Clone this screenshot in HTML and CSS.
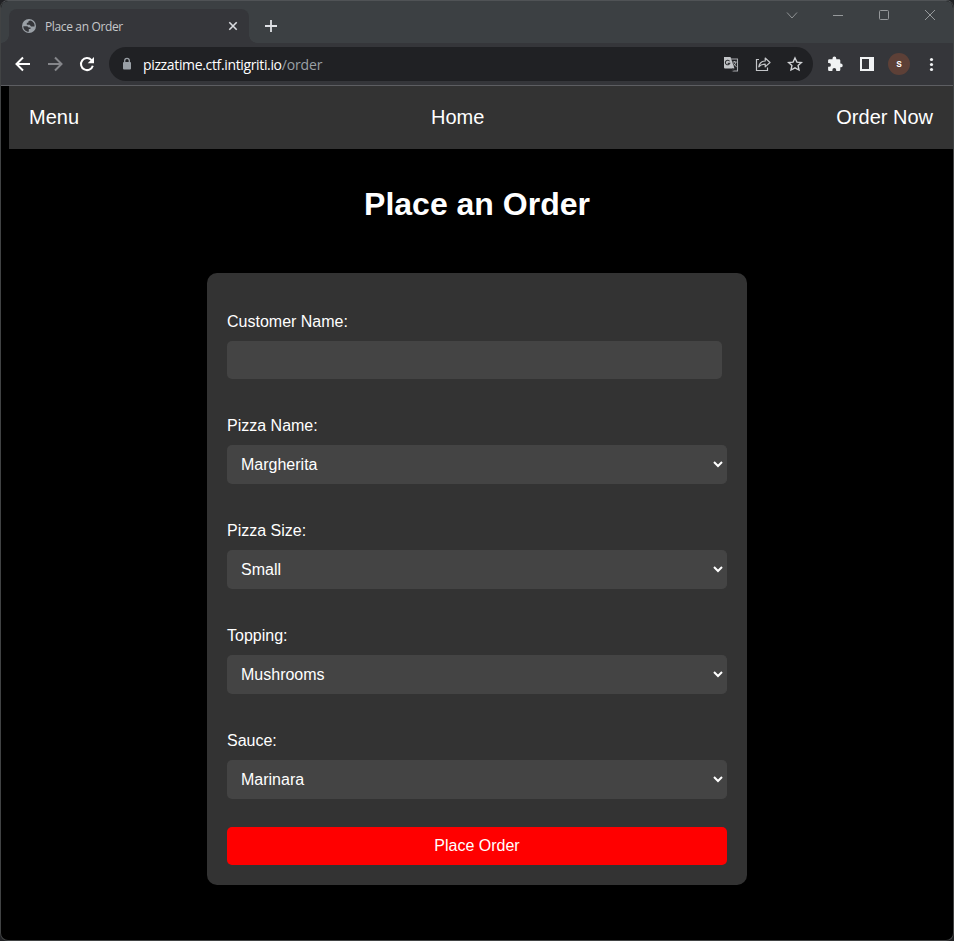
FILE: index.html
```html
<!DOCTYPE html>
<html lang="en">
<head>
<meta charset="utf-8">
<title>Place an Order</title>
<link rel="stylesheet" href="styles.css">
</head>
<body>
<div class="window">
  <header class="tabstrip">
    <div class="tab">
      <svg class="globe" width="16" height="16" viewBox="0 0 16 16"><circle cx="8" cy="8" r="7" fill="#9aa0a6"/><path d="M2.300 8.200h4l1.400 1.300h1.800v1.600H7.800v2.600C4.700 13.700 2.300 11.200 2.300 8.200zM9 2.400L7.300 3.500v1.300H5.800v1.900h2.700l1.700 1.700h3.300c.6-2.700-1.300-5.300-4.500-6z" fill="#35363a"/></svg>
      <span class="tab-title">Place an Order</span>
      <svg class="tab-close" width="16" height="16" viewBox="0 0 16 16"><path d="M4.300 4.300l7.400 7.400M11.700 4.300l-7.400 7.400" stroke="#dadce0" stroke-width="1.6"/></svg>
    </div>
    <svg class="new-tab" width="16" height="16" viewBox="0 0 16 16"><path d="M8 2v12M2 8h12" stroke="#dfe1e5" stroke-width="1.8"/></svg>
    <div class="controls">
      <svg width="46" height="28" viewBox="0 0 46 28"><path d="M18 11.500l5 5.500 5-5.500" fill="none" stroke="#8f9294"/></svg>
      <svg width="46" height="28" viewBox="0 0 46 28"><path d="M18 14.500h10" stroke="#96999b"/></svg>
      <svg width="46" height="28" viewBox="0 0 46 28"><rect x="18.500" y="9.500" width="9" height="9" rx="1" fill="none" stroke="#96999b"/></svg>
      <svg width="46" height="28" viewBox="0 0 46 28"><path d="M18 9l10 10M28 9L18 19" stroke="#96999b"/></svg>
    </div>
  </header>
  <div class="toolbar">
    <svg class="tool" viewBox="0 0 32 32"><path d="M23 16H10M16 9.500L9.500 16l6.500 6.500" fill="none" stroke="#fff" stroke-width="2"/></svg>
    <svg class="tool" viewBox="0 0 32 32"><path d="M9 16h13M16 9.500l6.500 6.500-6.500 6.500" fill="none" stroke="#85868a" stroke-width="2"/></svg>
    <svg class="tool" viewBox="0 0 32 32"><path d="M20.500 12.100A6 6 0 1 0 21.800 17.700" fill="none" stroke="#fff" stroke-width="2"/><path d="M23 9v6.300h-6.300z" fill="#fff"/></svg>
    <div class="omnibox">
      <svg class="lock" width="12" height="14" viewBox="0 0 12 14"><rect x="2" y="5" width="8" height="7.500" rx="1" fill="#9aa0a6"/><path d="M3.700 5.500V3.600a2.300 2.300 0 0 1 4.600 0v1.900" fill="none" stroke="#9aa0a6" stroke-width="1.300"/></svg>
      <div class="url"><span class="host">pizzatime.ctf.intigriti.io</span><span class="path">/order</span></div>
      <svg class="tool" viewBox="0 0 32 32"><path d="M16 11h6.500v12h-5.200" fill="none" stroke="#a8aaad" stroke-width="1.100"/><path d="M9 9h6.500l4 11.500H10a1 1 0 0 1-1-1z" fill="#c3c5c8"/><path d="M14.600 13.200a2.300 2.300 0 1 0 .2 2.200h-2.100M17.700 20.500l-.7 3 2.600-3" fill="none" stroke="#303134" stroke-width="1.100"/><path d="M17.600 14h4M19.600 13v1M20.900 14c-.3 1.800-1.300 3-2.300 3.800M18.600 15.400c.6 1.500 1.700 2.400 3 3.300" fill="none" stroke="#b5b7ba"/></svg>
      <svg class="tool" viewBox="0 0 32 32"><path d="M12 11.500H9.500v11h11v-3" fill="none" stroke="#c3c5c8" stroke-width="1.200"/><path d="M11.800 18.800c.6-3.800 2.900-5.600 6.400-5.800V10l4.800 4.500-4.800 4.400v-2.700c-2.700 0-4.800.7-6.400 2.600z" fill="none" stroke="#c3c5c8" stroke-width="1.200" stroke-linejoin="round"/></svg>
      <svg class="tool" viewBox="0 0 32 32"><path d="M16 10l1.900 4.100 4.500.5-3.300 3 .9 4.400-4-2.200-4 2.200.9-4.400-3.300-3 4.500-.5z" fill="none" stroke="#d0d2d5" stroke-width="1.400"/></svg>
    </div>
    <svg class="tool" viewBox="0 0 32 32"><path d="M10.300 11.300h3.200v-.8a1.900 1.900 0 0 1 3.800 0v.8h2.800a1.200 1.200 0 0 1 1.200 1.200v3h.5a1.900 1.900 0 0 1 0 3.800h-.5v2.500a1.200 1.200 0 0 1-1.200 1.200h-2.900V22a1.900 1.900 0 0 0-3.800 0v1h-3.100a1.200 1.200 0 0 1-1.200-1.200v-3h.9a1.900 1.900 0 0 0 0-3.800h-.9v-2.500a1.200 1.200 0 0 1 1.200-1.200z" fill="#f1f3f4"/></svg>
    <svg class="tool" viewBox="0 0 32 32"><path d="M9 9h14v14H9zM11 11v10h7V11z" fill="#f1f3f4" fill-rule="evenodd"/></svg>
    <div class="profile"><span class="avatar">s</span></div>
    <svg class="tool" viewBox="0 0 32 32"><g fill="#f1f3f4"><circle cx="16.500" cy="11.500" r="1.600"/><circle cx="16.500" cy="16.500" r="1.600"/><circle cx="16.500" cy="21.500" r="1.600"/></g></svg>
  </div>
  <main class="page">
    <nav class="nav"><a>Menu</a><a>Home</a><a>Order Now</a></nav>
    <h1>Place an Order</h1>
    <form class="order">
      <div class="field"><label for="customer">Customer Name:</label><input id="customer" type="text"></div>
      <div class="field"><label for="pizza">Pizza Name:</label><select id="pizza"><option>Margherita</option></select></div>
      <div class="field"><label for="size">Pizza Size:</label><select id="size"><option>Small</option></select></div>
      <div class="field"><label for="topping">Topping:</label><select id="topping"><option>Mushrooms</option></select></div>
      <div class="field"><label for="sauce">Sauce:</label><select id="sauce"><option>Marinara</option></select></div>
      <button type="button">Place Order</button>
    </form>
  </main>
</div>
</body>
</html>
```
FILE: styles.css
```css
* { box-sizing: border-box; }
html { height: 100%; overflow: hidden; background: #202124; }
body { margin: 0; height: 941px; overflow: hidden; font-family: "Liberation Sans", Arial, sans-serif; }
svg { display: block; flex: none; }

.window {
  height: 941px;
  border: 1px solid #414344;
  border-top-color: #505356;
  border-radius: 8px;
  overflow: hidden;
  background: #000;
}

/* Browser chrome */
.tabstrip {
  display: flex;
  height: 42px;
  padding-left: 8px;
  background: #3c4043;
}
.tab {
  position: relative;
  display: flex;
  align-items: center;
  width: 240px;
  height: 34px;
  margin-top: 8px;
  padding: 0 8px 0 12px;
  border-radius: 8px 8px 0 0;
  background: #35363a;
}
.tab::before,
.tab::after {
  content: "";
  position: absolute;
  bottom: 0;
  width: 8px;
  height: 8px;
}
.tab::before { left: -8px; background: radial-gradient(circle at 0 0, transparent 7.5px, #35363a 8px); }
.tab::after { right: -8px; background: radial-gradient(circle at 100% 0, transparent 7.5px, #35363a 8px); }
.tab-title {
  flex: 1;
  margin-left: 8px;
  padding-top: 2px;
  font: 12px/16px "Open Sans", "Noto Sans", sans-serif;
  letter-spacing: -0.36px;
  color: #c6c8ca;
}
.new-tab { margin: 17px 0 0 14px; }
.controls { display: flex; margin-left: auto; }

.toolbar {
  display: flex;
  align-items: center;
  height: 43px;
  padding: 0 6px;
  border-bottom: 1px solid #5d5e62;
  background: #35363a;
}
.tool { width: 32px; height: 32px; }
.omnibox {
  display: flex;
  align-items: center;
  width: 704px;
  height: 34px;
  margin: 0 6px;
  padding: 0 2px 0 12px;
  border-radius: 17px;
  background: #202124;
}
.url {
  flex: 1;
  margin-left: 10px;
  padding-top: 1px;
  font: 14px/20px "Open Sans", "Noto Sans", sans-serif;
  letter-spacing: -0.35px;
}
.host { color: #fff; }
.path { color: #9aa0a6; letter-spacing: -0.15px; }
.profile { display: flex; justify-content: center; width: 32px; }
.avatar {
  width: 22px;
  height: 22px;
  border-radius: 50%;
  background: #5d4037;
  color: #fff;
  font: 500 11px/21px Roboto, sans-serif;
  text-align: center;
}

/* Page */
.page { color: #fff; }
.nav {
  display: flex;
  justify-content: space-between;
  height: 63px;
  margin-left: 8px;
  padding: 20px;
  background: #333;
  font-size: 20px;
  line-height: 23px;
}
h1 {
  margin: 36px 0 50px;
  font-size: 32px;
  line-height: 38px;
  text-align: center;
}
.order {
  width: 540px;
  margin: 0 auto;
  padding: 39px 20px 20px;
  border-radius: 10px;
  background: #333;
}
.field + .field { margin-top: 37px; }
label {
  display: block;
  margin-bottom: 9px;
  font-size: 16px;
  line-height: 20px;
}
input,
select,
button {
  display: block;
  border: 0;
  border-radius: 5px;
  font: 16px "Liberation Sans", Arial, sans-serif;
  color: #fff;
}
input { width: 495px; height: 38px; padding: 10px; background: #444; }
select { width: 100%; height: 39px; padding: 10px; border-right: 1px solid #444; background: #444; }
button { width: 100%; height: 38px; margin-top: 28px; padding: 0; background: #f00; }
```
